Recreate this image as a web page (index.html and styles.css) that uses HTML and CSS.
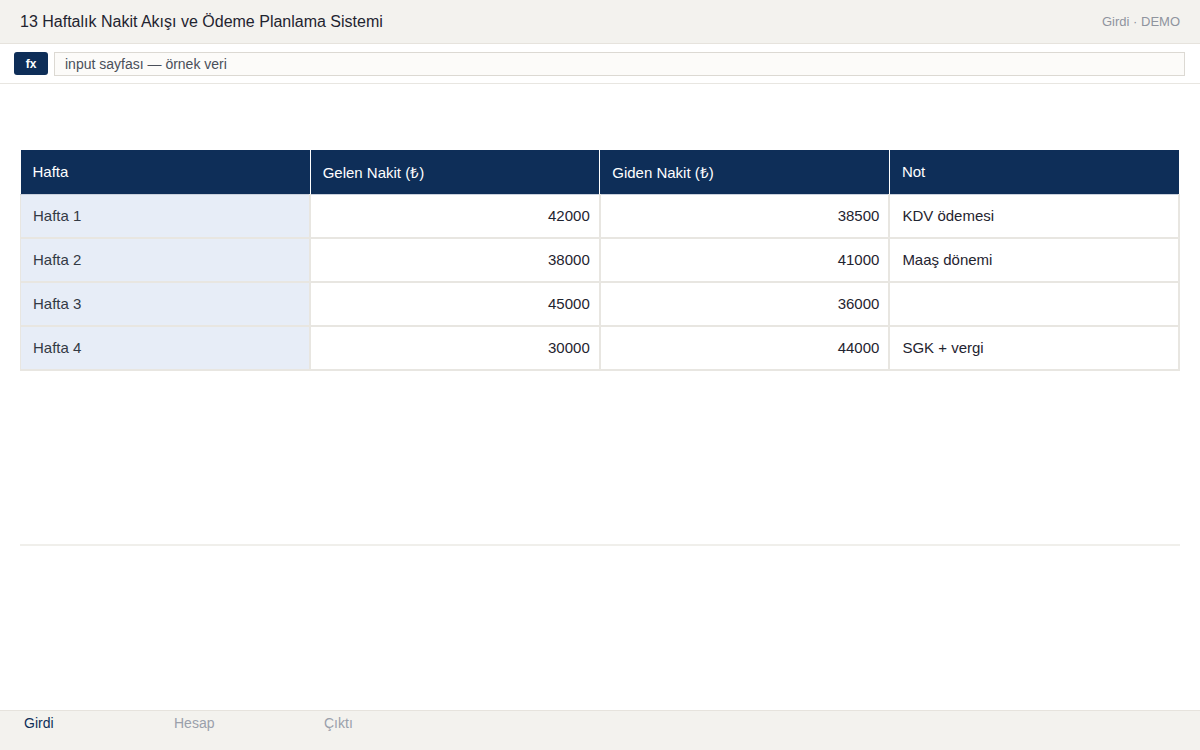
FILE: index.html
```html
<!DOCTYPE html>
<html lang="tr">
<head>
    <meta charset="UTF-8">
    <meta name="viewport" content="width=device-width, initial-scale=1.0">
    <title>13 Haftalık Nakit Akışı ve Ödeme Planlama Sistemi</title>
    <link rel="stylesheet" href="styles.css">
</head>
<body>
    <div class="topbar">
        <div class="title">13 Haftalık Nakit Akışı ve Ödeme Planlama Sistemi</div>
        <div class="sheet-info">Girdi · DEMO</div>
    </div>
    <div class="formula-bar">
        <span class="fx">fx</span>
        <div class="formula-input">input sayfası — örnek veri</div>
    </div>

    <div class="sheet">
        <table class="grid">
            <thead>
                <tr>
                    <th>Hafta</th>
                    <th>Gelen Nakit (₺)</th>
                    <th>Giden Nakit (₺)</th>
                    <th>Not</th>
                </tr>
            </thead>
            <tbody>
                <tr><td class="label">Hafta 1</td><td class="num">42000</td><td class="num">38500</td><td>KDV ödemesi</td></tr>
                <tr><td class="label">Hafta 2</td><td class="num">38000</td><td class="num">41000</td><td>Maaş dönemi</td></tr>
                <tr><td class="label">Hafta 3</td><td class="num">45000</td><td class="num">36000</td><td></td></tr>
                <tr><td class="label">Hafta 4</td><td class="num">30000</td><td class="num">44000</td><td>SGK + vergi</td></tr>
            </tbody>
        </table>
        <div class="divider"></div>
    </div>

    <div class="tabs">
        <div class="tab active">Girdi</div>
        <div class="tab">Hesap</div>
        <div class="tab">Çıktı</div>
    </div>
</body>
</html>
```

FILE: styles.css
```css
html, body {
    height: 100%;
}

body {
    margin: 0;
    font-family: "Liberation Sans", Arial, sans-serif;
    color: #1f2430;
    background-color: #fff;
    display: flex;
    flex-direction: column;
}

.topbar {
    height: 44px;
    box-sizing: border-box;
    padding: 0 20px;
    display: flex;
    justify-content: space-between;
    align-items: center;
    background-color: #f3f2ee;
    border-bottom: 1px solid #e6e3dd;
}

.title {
    font-size: 16px;
    color: #1f2430;
}

.sheet-info {
    font-size: 13px;
    color: #8f949e;
}

.formula-bar {
    height: 40px;
    box-sizing: border-box;
    padding: 0 15px 0 14px;
    display: flex;
    align-items: center;
    gap: 6px;
    border-bottom: 1px solid #e8e6e1;
}

.fx {
    width: 34px;
    height: 23px;
    display: flex;
    justify-content: center;
    align-items: center;
    background-color: #0e2e58;
    color: #fff;
    font-size: 12px;
    font-weight: bold;
    border-radius: 3px;
}

.formula-input {
    flex: 1;
    height: 24px;
    box-sizing: border-box;
    padding: 0 10px;
    display: flex;
    align-items: center;
    font-size: 14px;
    color: #4a4f59;
    background-color: #fcfbf9;
    border: 1px solid #dcd9d3;
}

.sheet {
    flex: 1;
    padding: 66px 20px 0;
}

.grid {
    width: 100%;
    border-collapse: collapse;
    table-layout: fixed;
    font-size: 15px;
}

.grid th {
    height: 44px;
    box-sizing: border-box;
    padding: 0 12px;
    text-align: left;
    font-weight: normal;
    color: #fff;
    background-color: #0e2e58;
    border-left: 1px solid #fff;
    border-bottom: 1px solid #c9d0dc;
}

.grid th:first-child {
    border-left: none;
}

.grid td {
    height: 42px;
    padding: 0 12px;
    color: #1f2430;
    border: 1px solid #e8e6e1;
    border-width: 1px 2px 2px 1px;
}

.grid td.label {
    background-color: #e7edf7;
    color: #333a45;
}

.grid td.num {
    text-align: right;
    padding-right: 9px;
}

.divider {
    margin-top: 173px;
    height: 2px;
    background-color: #f0efeb;
}

.tabs {
    height: 40px;
    box-sizing: border-box;
    display: flex;
    background-color: #f3f2ee;
    border-top: 1px solid #e6e3dd;
}

.tab {
    width: 150px;
    padding: 4px 0 0 24px;
    box-sizing: border-box;
    font-size: 14px;
    color: #9aa0ab;
}

.tab.active {
    color: #0e2e58;
}
```
